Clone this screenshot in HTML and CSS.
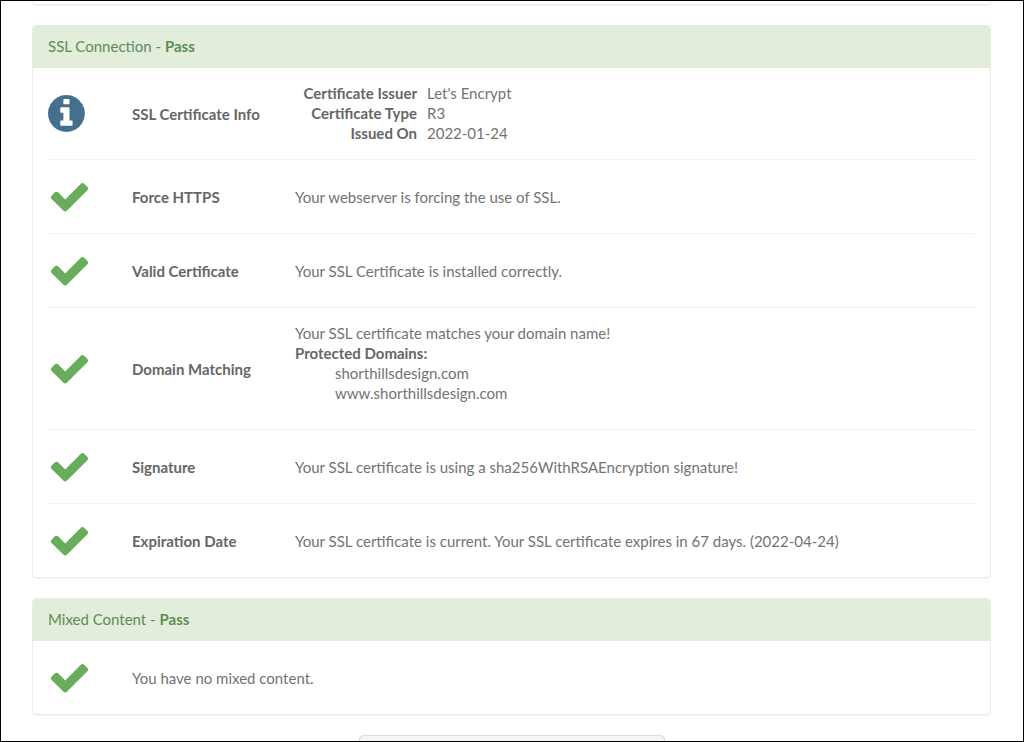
FILE: index.html
```html
<!DOCTYPE html>
<html lang="en">
<head>
  <meta charset="UTF-8">
  <title>SSL Check</title>
  <meta name="viewport" content="width=device-width, initial-scale=1">
  <link rel="stylesheet" href="styles.css">
</head>
<body>
  <!-- Shared icons -->
  <svg class="sprite" aria-hidden="true">
    <symbol id="check" viewBox="0 0 1792 1792"><path d="M1671 566q0 40-28 68l-724 724-136 136q-28 28-68 28t-68-28l-136-136-362-362q-28-28-28-68t28-68l136-136q28-28 68-28t68 28l294 295 656-657q28-28 68-28t68 28l136 136q28 28 28 68z"/></symbol>
    <symbol id="info" viewBox="128 0 1792 1792"><path d="M1152 1376v-160q0-14-9-23t-23-9h-96v-512q0-14-9-23t-23-9h-320q-14 0-23 9t-9 23v160q0 14 9 23t23 9h96v320h-96q-14 0-23 9t-9 23v160q0 14 9 23t23 9h448q14 0 23-9t9-23zm-128-896v-160q0-14-9-23t-23-9h-192q-14 0-23 9t-9 23v160q0 14 9 23t23 9h192q14 0 23-9t9-23zm640 416q0 209-103 385.5t-279.5 279.5-385.5 103-385.5-103-279.5-279.5-103-385.5 103-385.5 279.5-279.5 385.5-103 385.5 103 279.5 279.5 103 385.5z"/></symbol>
  </svg>
  <main class="results">
    <div class="panel panel-info"></div>

    <section class="panel">
      <h2 class="panel-heading">SSL Connection - <strong>Pass</strong></h2>
      <div class="panel-body">
        <table class="checks">
          <tbody>
            <tr>
              <td class="status"><svg class="icon info"><use href="#info"/></svg></td>
              <th scope="row">SSL Certificate Info</th>
              <td>
                <dl class="cert">
                  <dt>Certificate Issuer</dt><dd>Let's Encrypt</dd>
                  <dt>Certificate Type</dt><dd>R3</dd>
                  <dt>Issued On</dt><dd>2022-01-24</dd>
                </dl>
              </td>
            </tr>
            <tr>
              <td class="status"><svg class="icon"><use href="#check"/></svg></td>
              <th scope="row">Force HTTPS</th>
              <td>Your webserver is forcing the use of SSL.</td>
            </tr>
            <tr>
              <td class="status"><svg class="icon"><use href="#check"/></svg></td>
              <th scope="row">Valid Certificate</th>
              <td>Your SSL Certificate is installed correctly.</td>
            </tr>
            <tr>
              <td class="status"><svg class="icon"><use href="#check"/></svg></td>
              <th scope="row">Domain Matching</th>
              <td>
                Your SSL certificate matches your domain name!<br>
                <strong>Protected Domains:</strong>
                <ul class="domains">
                  <li>shorthillsdesign.com</li>
                  <li>www.shorthillsdesign.com</li>
                </ul>
              </td>
            </tr>
            <tr>
              <td class="status"><svg class="icon"><use href="#check"/></svg></td>
              <th scope="row">Signature</th>
              <td>Your SSL certificate is using a sha256WithRSAEncryption signature!</td>
            </tr>
            <tr>
              <td class="status"><svg class="icon"><use href="#check"/></svg></td>
              <th scope="row">Expiration Date</th>
              <td>Your SSL certificate is current. Your SSL certificate expires in 67 days. (2022-04-24)</td>
            </tr>
          </tbody>
        </table>
      </div>
    </section>

    <section class="panel">
      <h2 class="panel-heading">Mixed Content - <strong>Pass</strong></h2>
      <div class="panel-body">
        <table class="checks">
          <tbody>
            <tr>
              <td class="status"><svg class="icon"><use href="#check"/></svg></td>
              <td>You have no mixed content.</td>
            </tr>
          </tbody>
        </table>
      </div>
    </section>

    <div class="box"></div>
  </main>
</body>
</html>
```

FILE: styles.css
```css
:root { --green: #67ad5b; --blue: #44708e; --panel-border: #e9eee2; }
* { box-sizing: border-box; margin: 0; padding: 0; }
body { height: 100vh; overflow: hidden; border: 1px solid #000; background: #fff; color: #737373; font: 15px/20px Lato, sans-serif; }
.sprite { display: none; }
.results { padding: 0 32px 0 31px; }

.panel { margin-bottom: 20px; border: 1px solid var(--panel-border); border-radius: 4px; box-shadow: 0 1px 1px rgba(0,0,0,.04); }
.panel-info { height: 4px; border-color: #e6eff2; border-top: none; border-radius: 0 0 4px 4px; }
.panel-heading { padding: 10px 15px 12px; background: #e2eedb; border-radius: 3px 3px 0 0; color: #5c8c58; font-size: 15px; font-weight: normal; }
.panel-body { padding: 0 15px; }

.checks { width: 100%; border-collapse: separate; border-spacing: 0; }
.checks th, .checks td { padding: 15px 0; text-align: left; vertical-align: middle; }
.checks th { width: 163px; color: #666; }
.checks tr + tr > * { border-top: 1px solid #f1f1f1; }
.checks .status { width: 84px; }
.icon { display: block; width: 43px; height: 43px; fill: var(--green); }
.icon.info { fill: var(--blue); }

.cert { display: grid; grid-template-columns: 122px 1fr; column-gap: 10px; margin-bottom: 1px; }
.cert dt, .checks strong { color: #666; font-weight: bold; }
.cert dt { text-align: right; }
.domains { margin-bottom: 11px; padding-left: 40px; list-style: none; }

.box { width: 306px; height: 40px; margin: 0 auto; border: 1px solid #ddd; border-radius: 4px; background: #f5f5f5; }
```
